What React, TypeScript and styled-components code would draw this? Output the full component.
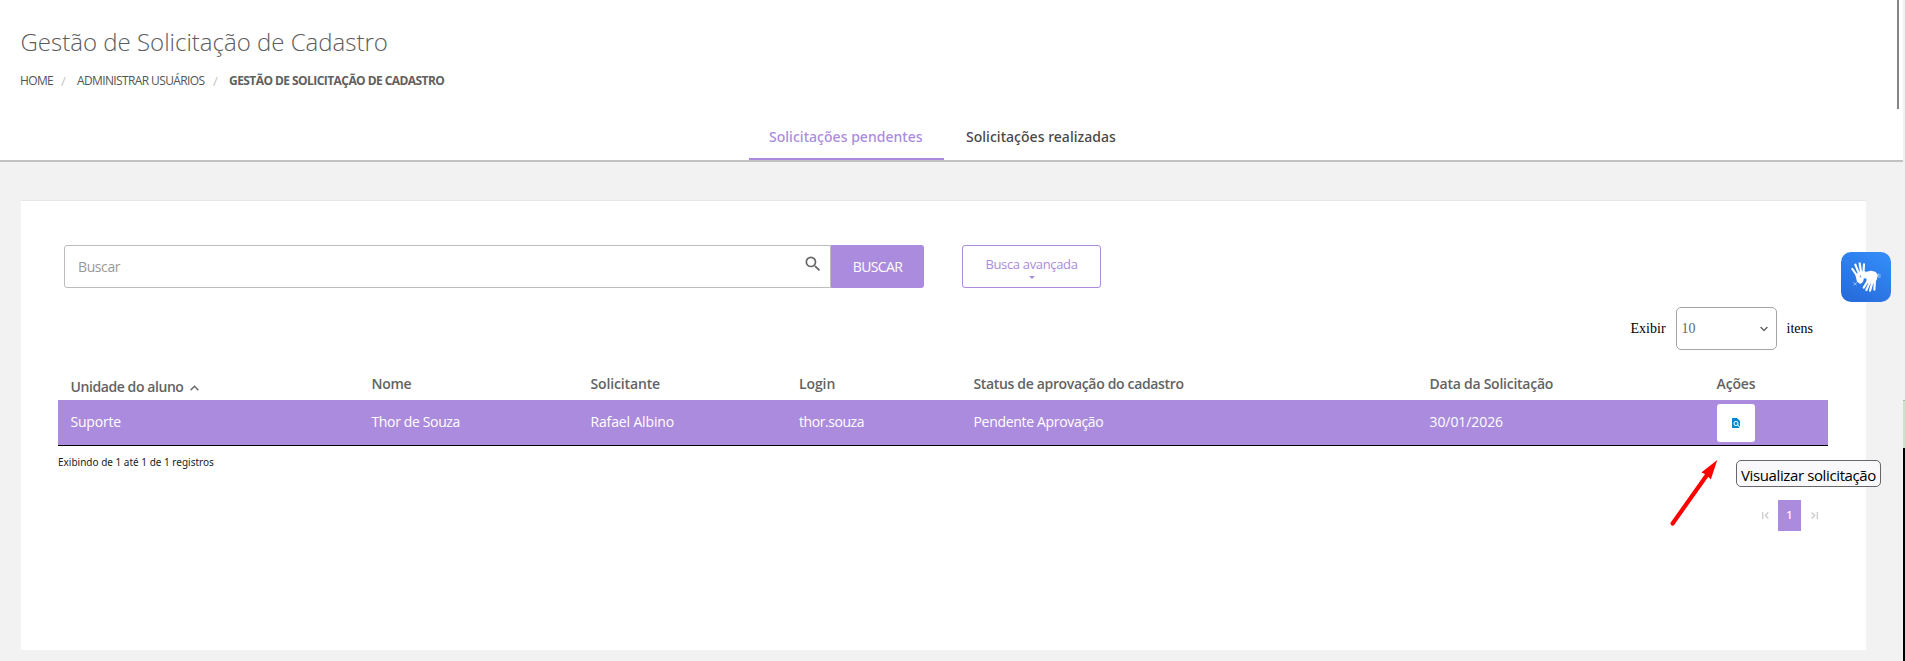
import React from 'react';
import styled, { createGlobalStyle, css } from 'styled-components';
import { MdSearch, MdFindInPage } from 'react-icons/md';

const purple = '#ab8bde';
const sans = '"Open Sans", "Noto Sans", sans-serif';

const GlobalStyle = createGlobalStyle`
  * { box-sizing: border-box; }
  html, body { margin: 0; padding: 0; overflow: hidden; }
  body { background: #f2f2f2; font-family: ${sans}; }
  button, input { font: inherit; margin: 0; }
`;

const Screen = styled.div`
  position: relative;
  display: flex;
  width: 1905px;
  height: 661px;
  overflow: hidden;
`;

const Page = styled.div`
  width: 1903px;
  display: flex;
  flex-direction: column;
  background: #f2f2f2;
`;

const WindowEdge = styled.div`
  width: 2px;
  background: linear-gradient(#f1f1f1 400px, #aebaae 400px 401px, #cfe0cf 401px 448px, #000 448px);
`;

const Header = styled.header`
  height: 162px;
  background: #fff;
  border-bottom: 2px solid #c2c2c2;
  display: flex;
  flex-direction: column;
`;

const Title = styled.h1`
  margin: 24px 0 0 20.5px;
  height: 36px;
  line-height: 36px;
  font-size: 24px;
  font-weight: 300;
  color: #5c5c5c;
  white-space: nowrap;
`;

const Breadcrumb = styled.nav`
  margin: 12px 0 0 20px;
  height: 18px;
  display: flex;
  align-items: center;
  font-size: 12px;
  line-height: 18px;
  color: #555;
  white-space: nowrap;
`;

const Crumb = styled.span<{ $width: number; $current?: boolean }>`
  width: ${p => p.$width}px;
  letter-spacing: -0.62px;
  ${p => p.$current && css`
    font-weight: 700;
    letter-spacing: -0.56px;
    color: #606060;
  `}
`;

const Slash = styled.span<{ $width: number }>`
  width: ${p => p.$width}px;
  font-size: 13px;
  color: #c4c4c4;
`;

const Tabs = styled.div`
  margin-top: auto;
  margin-left: 749px;
  display: flex;
`;

const Tab = styled.button<{ $active?: boolean }>`
  height: 46px;
  padding: 1px 20px 0;
  width: 195px;
  border: 0;
  border-bottom: 2px solid ${p => (p.$active ? purple : 'transparent')};
  background: none;
  font: 500 14px/43px "Noto Sans", ${sans};
  color: ${p => (p.$active ? purple : '#484848')};
  letter-spacing: 0.03px;
  text-align: left;
  white-space: nowrap;
  & + & { padding-left: 22px; }
`;

const Card = styled.main`
  margin: 38px 0 0 21px;
  width: 1845px;
  height: 450px;
  background: #fff;
  border-top: 1px solid #e6e6e6;
  padding: 44px 38px 0 37px;
`;

const SearchRow = styled.div`
  display: flex;
  height: 43px;
  padding-left: 6px;
`;

const SearchField = styled.label`
  width: 767px;
  border: 1px solid #bcbcbc;
  border-radius: 3px 0 0 3px;
  display: flex;
  justify-content: space-between;
  padding: 0 7px 0 13px;
`;

const SearchInput = styled.input`
  flex: 1;
  border: 0;
  outline: 0;
  padding: 0 0 1px;
  background: none;
  font-size: 14px;
  letter-spacing: -0.4px;
  &::placeholder { color: #999; opacity: 1; }
`;

const SearchIcon = styled(MdSearch)`
  width: 20px;
  height: 20px;
  margin-top: 8px;
  color: #666;
`;

const SearchButton = styled.button`
  width: 93px;
  border: 0;
  border-radius: 0 3px 3px 0;
  background: ${purple};
  color: #fff;
  font-size: 14px;
  letter-spacing: -0.62px;
`;

const AdvancedButton = styled.button`
  width: 139px;
  margin-left: 38px;
  padding: 9px 0 0;
  border: 1px solid ${purple};
  border-radius: 3px;
  background: #fff;
  color: ${purple};
  display: flex;
  flex-direction: column;
  align-items: center;
  font-size: 13px;
  line-height: 18px;
  letter-spacing: -0.34px;
  svg { margin-top: 3px; }
`;

const PageSize = styled.div`
  margin-top: 19px;
  padding-right: 15px;
  height: 43px;
  display: flex;
  justify-content: flex-end;
  align-items: center;
  font: 14px "Liberation Serif", serif;
  color: #000;
`;

const SizeSelect = styled.div`
  width: 101px;
  height: 43px;
  margin: 0 10px;
  padding: 0 8px 0 5px;
  border: 1px solid #a4a4a4;
  border-radius: 5px;
  display: flex;
  align-items: center;
  justify-content: space-between;
  font-size: 14px;
  color: #666;
`;

const GridRow = styled.div`
  display: grid;
  grid-template-columns: 301px 219px 208.5px 174.5px 456px 287px 1fr;
  padding-left: 12.5px;
  white-space: nowrap;
`;

const HeadRow = styled(GridRow)`
  height: 50px;
  padding-top: 23px;
`;

const HeadCell = styled.div<{ $spacing: number; $sorted?: boolean }>`
  display: flex;
  font-size: 14px;
  font-weight: 600;
  line-height: 22px;
  letter-spacing: ${p => p.$spacing}px;
  color: #636363;
  padding-top: ${p => (p.$sorted ? 3 : 0)}px;
  svg { margin: 9px 0 0 7px; }
`;

const DataRow = styled(GridRow)`
  height: 46px;
  background: ${purple};
  border-bottom: 1px solid #000;
`;

const Cell = styled.div<{ $spacing: number }>`
  font-size: 14px;
  line-height: 44px;
  letter-spacing: ${p => p.$spacing}px;
  color: #fff;
`;

const ViewButton = styled.button`
  width: 38px;
  height: 38px;
  margin-top: 4px;
  padding: 0;
  border: 0;
  border-radius: 3px;
  background: #fff;
  color: #0288d1;
  display: flex;
  align-items: center;
  justify-content: center;
  svg { width: 12px; height: 12px; }
`;

const TableInfo = styled.div`
  margin-top: 8px;
  font: 10px/16px "Noto Sans", ${sans};
  color: #222;
`;

const Pagination = styled.div`
  margin-top: 30px;
  padding-right: 10px;
  height: 31px;
  display: flex;
  justify-content: flex-end;
  align-items: center;
`;

const CurrentPage = styled.span`
  width: 23px;
  height: 31px;
  margin: 0 10px 0 9px;
  background: ${purple};
  color: #fff;
  font: 500 11px/30px "Noto Sans", sans-serif;
  text-align: center;
`;

const Tooltip = styled.div`
  position: absolute;
  left: 1736px;
  top: 460px;
  width: 145px;
  height: 27px;
  padding-left: 4px;
  border: 1px solid #66666b;
  border-radius: 5px;
  background: #f9f9fb;
  color: #000;
  font-size: 15px;
  line-height: 28px;
  letter-spacing: -0.38px;
  white-space: nowrap;
`;

const Pointer = styled.svg`
  position: absolute;
  left: 1665px;
  top: 455px;
`;

const ScrollThumb = styled.div`
  position: absolute;
  left: 1897px;
  top: 0;
  width: 2px;
  height: 109px;
  background: #858585;
`;

const SignButton = styled.button`
  position: absolute;
  left: 1841px;
  top: 252px;
  width: 50px;
  height: 50px;
  padding: 0;
  border: 0;
  border-radius: 10px;
  background: linear-gradient(30deg, #2568d8, #348ffa);
  svg { display: block; }
`;

const headers = [
  { text: 'Unidade do aluno', spacing: -0.42, sorted: true },
  { text: 'Nome', spacing: -0.3 },
  { text: 'Solicitante', spacing: -0.14 },
  { text: 'Login', spacing: -0.1 },
  { text: 'Status de aprovação do cadastro', spacing: -0.34 },
  { text: 'Data da Solicitação', spacing: -0.25 },
  { text: 'Ações', spacing: -0.13 },
];

const cells = [
  { text: 'Suporte', spacing: -0.2 },
  { text: 'Thor de Souza', spacing: -0.36 },
  { text: 'Rafael Albino', spacing: -0.15 },
  { text: 'thor.souza', spacing: -0.44 },
  { text: 'Pendente Aprovação', spacing: -0.32 },
  { text: '30/01/2026', spacing: -0.08 },
];

function Hands() {
  return (
    <svg width="50" height="50" viewBox="0 0 150 150" fill="none" stroke="#fff" strokeLinecap="round" strokeLinejoin="round">
      <path d="M34 51L50 74M43 38L55 68M56 34L61 66M69 37L67 66" strokeWidth="6.5" />
      <path d="M46 70L58 60L70 62L72 60L57 67L53 74L60 80L66 80L64 88L58 93L50 87Z" fill="#fff" strokeWidth="5" />
      <path d="M61 70L77 62L90 59L102 62L108 69L105 82L98 92L84 92L79 86L79 77L63 76Z" fill="#fff" strokeWidth="5" />
      <path d="M81 86L68 107M88 88L76 114M95 88L87 116M102 82L100 113" strokeWidth="6.5" />
      <path d="M113 65V77M117 67V76M38 92L46 99M38 99L47 92" strokeWidth="2" opacity=".7" />
    </svg>
  );
}

export default function App() {
  return (
    <Screen>
      <GlobalStyle />
      <Page>
        <Header>
          <Title>Gestão de Solicitação de Cadastro</Title>
          <Breadcrumb>
            <Crumb $width={41}>HOME</Crumb>
            <Slash $width={16}>/</Slash>
            <Crumb $width={136}>ADMINISTRAR USUÁRIOS</Crumb>
            <Slash $width={16}>/</Slash>
            <Crumb $width={220} $current>GESTÃO DE SOLICITAÇÃO DE CADASTRO</Crumb>
          </Breadcrumb>
          <Tabs>
            <Tab $active>Solicitações pendentes</Tab>
            <Tab>Solicitações realizadas</Tab>
          </Tabs>
        </Header>
        <Card>
          <SearchRow>
            <SearchField>
              <SearchInput placeholder="Buscar" />
              <SearchIcon />
            </SearchField>
            <SearchButton>BUSCAR</SearchButton>
            <AdvancedButton>
              Busca avançada
              <svg width="6" height="3" viewBox="0 0 6 3" fill="currentColor">
                <path d="M0 0H6L3 3Z" />
              </svg>
            </AdvancedButton>
          </SearchRow>
          <PageSize>
            <span>Exibir</span>
            <SizeSelect>
              10
              <svg width="8" height="6" viewBox="0 0 8 6" fill="none" stroke="#666" strokeWidth="1.4">
                <path d="M.6 1L4 4.6L7.4 1" />
              </svg>
            </SizeSelect>
            <span>itens</span>
          </PageSize>
          <HeadRow>
            {headers.map(h => (
              <HeadCell key={h.text} $spacing={h.spacing} $sorted={h.sorted}>
                {h.text}
                {h.sorted && (
                  <svg width="9" height="6" viewBox="0 0 9 6" fill="none" stroke="#666" strokeWidth="1.4">
                    <path d="M.6 5.2L4.5 1.2L8.4 5.2" />
                  </svg>
                )}
              </HeadCell>
            ))}
          </HeadRow>
          <DataRow>
            {cells.map(c => (
              <Cell key={c.text} $spacing={c.spacing}>{c.text}</Cell>
            ))}
            <ViewButton aria-label="Visualizar solicitação">
              <MdFindInPage />
            </ViewButton>
          </DataRow>
          <TableInfo>Exibindo de 1 até 1 de 1 registros</TableInfo>
          <Pagination>
            <svg width="7" height="7" viewBox="0 0 7 7" fill="none" stroke="#c6c6c6" strokeWidth="1.2">
              <path d="M.7 0V7M6.3 .5L3.3 3.5L6.3 6.5" />
            </svg>
            <CurrentPage>1</CurrentPage>
            <svg width="7" height="7" viewBox="0 0 7 7" fill="none" stroke="#c6c6c6" strokeWidth="1.2">
              <path d="M6.3 0V7M.7 .5L3.7 3.5L.7 6.5" />
            </svg>
          </Pagination>
        </Card>
      </Page>
      <WindowEdge />
      <ScrollThumb />
      <SignButton aria-label="Libras">
        <Hands />
      </SignButton>
      <Pointer width="60" height="75" viewBox="0 0 60 75">
        <path d="M7.6 68.5L42 20" stroke="#f00" strokeWidth="4.2" strokeLinecap="round" />
        <path d="M52.3 5L36.3 17.6L39.5 18.7L44 22.5L45.8 24.5Z" fill="#f00" />
      </Pointer>
      <Tooltip>Visualizar solicitação</Tooltip>
    </Screen>
  );
}
